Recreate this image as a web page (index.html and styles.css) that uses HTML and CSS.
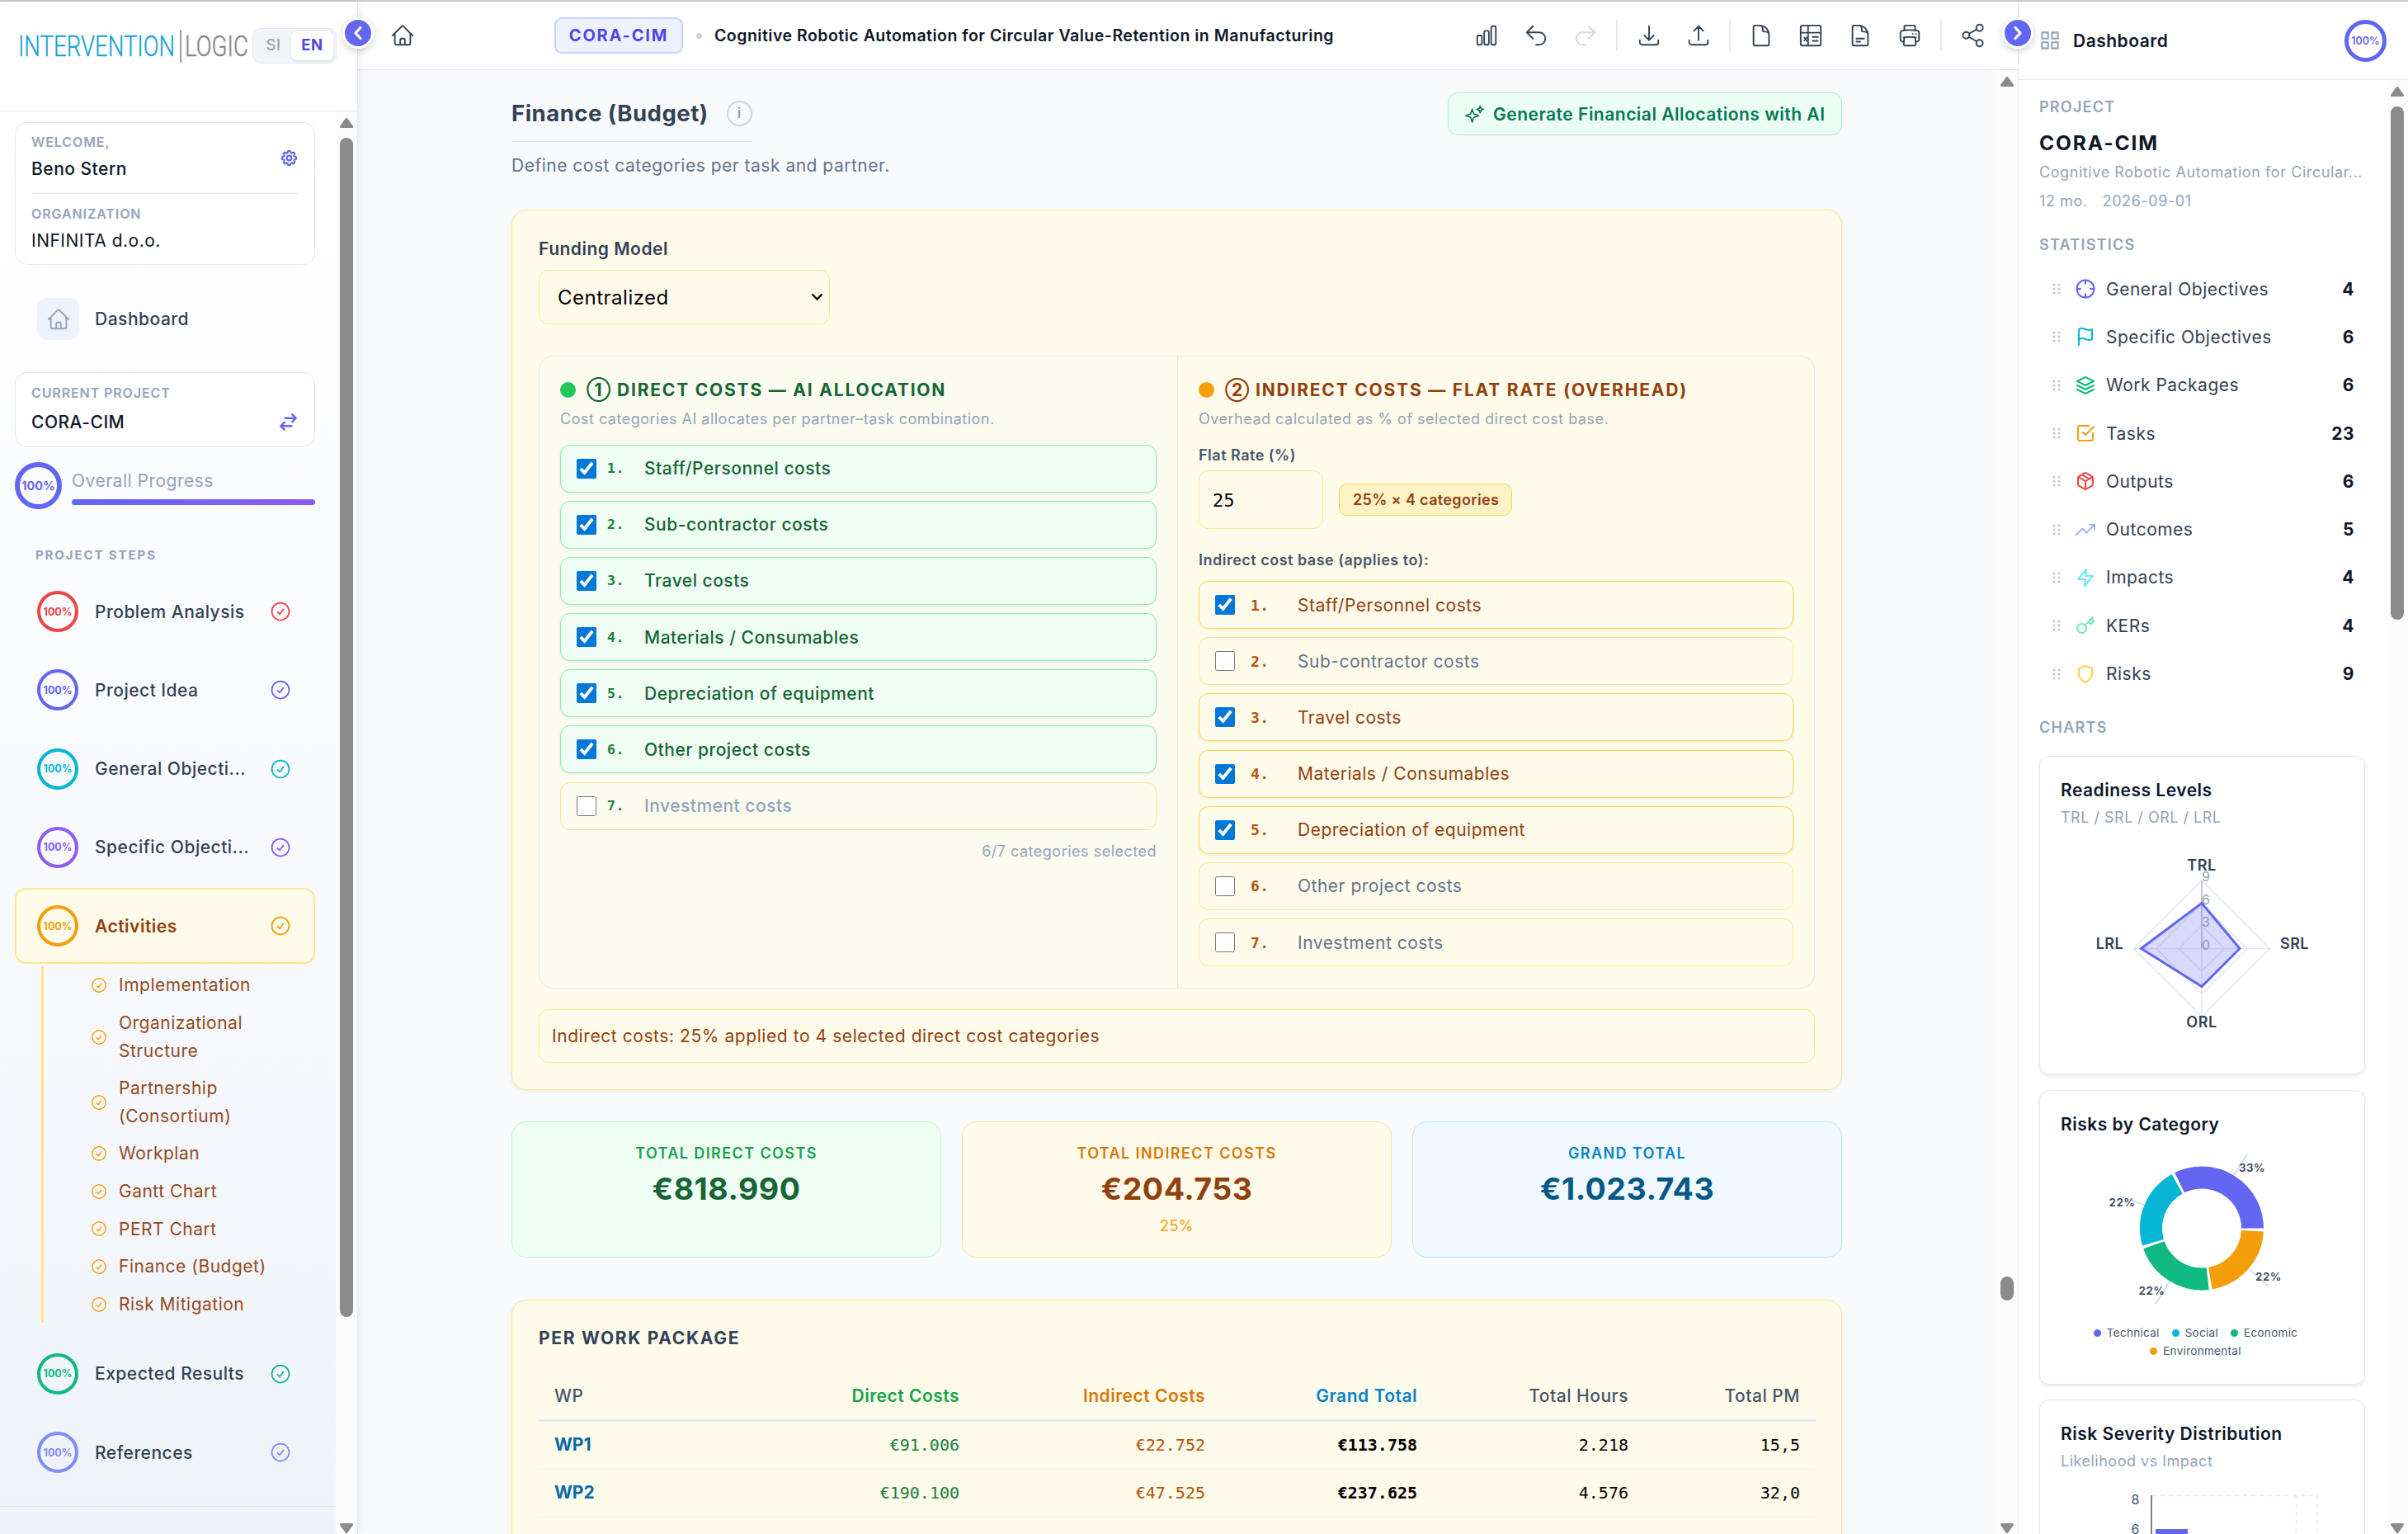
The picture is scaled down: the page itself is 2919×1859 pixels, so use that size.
FILE: index.html
```html
<!DOCTYPE html>
<html lang="en">
<head>
    <meta charset="utf-8">
    <title>Intervention Logic - Finance (Budget)</title>
    <link rel="stylesheet" href="styles.css">
</head>
<body>

<!-- icon set -->
<svg class="defs" width="0" height="0">
    <symbol id="home" viewBox="0 0 24 24"><path d="m2.25 12 8.954-8.955c.44-.439 1.152-.439 1.591 0L21.75 12M4.5 9.75v10.125c0 .621.504 1.125 1.125 1.125H9.75v-4.875c0-.621.504-1.125 1.125-1.125h2.25c.621 0 1.125.504 1.125 1.125V21h4.125c.621 0 1.125-.504 1.125-1.125V9.75M8.25 21h8.25"/></symbol>
    <symbol id="bars" viewBox="0 0 24 24"><path d="M3 13.125C3 12.504 3.504 12 4.125 12h2.25c.621 0 1.125.504 1.125 1.125v6.75C7.5 20.496 6.996 21 6.375 21h-2.25A1.125 1.125 0 0 1 3 19.875v-6.75ZM9.75 8.625c0-.621.504-1.125 1.125-1.125h2.25c.621 0 1.125.504 1.125 1.125v11.25c0 .621-.504 1.125-1.125 1.125h-2.25a1.125 1.125 0 0 1-1.125-1.125V8.625ZM16.5 4.125c0-.621.504-1.125 1.125-1.125h2.25C20.496 3 21 3.504 21 4.125v15.75c0 .621-.504 1.125-1.125 1.125h-2.25a1.125 1.125 0 0 1-1.125-1.125V4.125Z"/></symbol>
    <symbol id="undo" viewBox="0 0 24 24"><path d="M9 15 3 9m0 0 6-6M3 9h12a6 6 0 0 1 0 12h-3"/></symbol>
    <symbol id="redo" viewBox="0 0 24 24"><path d="m15 15 6-6m0 0-6-6m6 6H9a6 6 0 0 0 0 12h3"/></symbol>
    <symbol id="download" viewBox="0 0 24 24"><path d="M3 16.5v2.25A2.25 2.25 0 0 0 5.25 21h13.5A2.25 2.25 0 0 0 21 18.75V16.5M16.5 12 12 16.5m0 0L7.5 12m4.5 4.5V3"/></symbol>
    <symbol id="upload" viewBox="0 0 24 24"><path d="M3 16.5v2.25A2.25 2.25 0 0 0 5.25 21h13.5A2.25 2.25 0 0 0 21 18.75V16.5m-13.5-9L12 3m0 0 4.5 4.5M12 3v13.5"/></symbol>
    <symbol id="doc" viewBox="0 0 24 24"><path d="M19.5 14.25v-2.625a3.375 3.375 0 0 0-3.375-3.375h-1.5A1.125 1.125 0 0 1 13.5 7.125v-1.5a3.375 3.375 0 0 0-3.375-3.375H8.25m2.25 0H5.625c-.621 0-1.125.504-1.125 1.125v17.25c0 .621.504 1.125 1.125 1.125h12.75c.621 0 1.125-.504 1.125-1.125V11.25a9 9 0 0 0-9-9Z"/></symbol>
    <symbol id="sheet" viewBox="0 0 24 24"><rect x="2.25" y="2.25" width="19.5" height="19.5" rx="1.8"/><path d="M9.4 2.25v19.5M2.25 9.3h19.5M13.9 13.4h5M13.9 17.2h5M5.8 14l2.4 3M8.2 14l-2.4 3"/></symbol>
    <symbol id="doctext" viewBox="0 0 24 24"><path d="M19.5 14.25v-2.625a3.375 3.375 0 0 0-3.375-3.375h-1.5A1.125 1.125 0 0 1 13.5 7.125v-1.5a3.375 3.375 0 0 0-3.375-3.375H8.25m0 12.75h7.5m-7.5 3H12M10.5 2.25H5.625c-.621 0-1.125.504-1.125 1.125v17.25c0 .621.504 1.125 1.125 1.125h12.75c.621 0 1.125-.504 1.125-1.125V11.25a9 9 0 0 0-9-9Z"/></symbol>
    <symbol id="print" viewBox="0 0 24 24"><path d="M6.72 13.829c-.24.03-.48.062-.72.096m.72-.096a42.415 42.415 0 0 1 10.56 0m-10.56 0L6.34 18m10.94-4.171c.24.03.48.062.72.096m-.72-.096L17.66 18m0 0 .229 2.523a1.125 1.125 0 0 1-1.12 1.227H7.231c-.662 0-1.18-.568-1.12-1.227L6.34 18m11.318 0h1.091A2.25 2.25 0 0 0 21 15.75V9.456c0-1.081-.768-2.015-1.837-2.175a48.055 48.055 0 0 0-1.913-.247M6.34 18H5.25A2.25 2.25 0 0 1 3 15.75V9.456c0-1.081.768-2.015 1.837-2.175a48.041 48.041 0 0 1 1.913-.247m10.5 0a48.536 48.536 0 0 0-10.5 0m10.5 0V3.375c0-.621-.504-1.125-1.125-1.125h-8.25c-.621 0-1.125.504-1.125 1.125v3.659M18 10.5h.008v.008H18V10.5Zm-3 0h.008v.008H15V10.5Z"/></symbol>
    <symbol id="share" viewBox="0 0 24 24"><circle cx="18.1" cy="4.6" r="3.2"/><circle cx="5.1" cy="11.8" r="3.2"/><circle cx="18.1" cy="19.4" r="3.2"/><path d="M7.9 10.2l7.4-4.1M7.9 13.4l7.4 4.4"/></symbol>
    <symbol id="gear" viewBox="0 0 24 24"><path d="M10.343 3.94c.09-.542.56-.94 1.11-.94h1.093c.55 0 1.02.398 1.11.94l.149.894c.07.424.384.764.78.93.398.164.855.142 1.205-.108l.737-.527a1.125 1.125 0 0 1 1.45.12l.773.774c.39.389.44 1.002.12 1.45l-.527.737c-.25.35-.272.806-.107 1.204.165.397.505.71.93.78l.893.15c.543.09.94.559.94 1.109v1.094c0 .55-.397 1.02-.94 1.11l-.894.149c-.424.07-.764.383-.929.78-.165.398-.143.854.107 1.204l.527.738c.32.447.269 1.06-.12 1.45l-.774.773a1.125 1.125 0 0 1-1.449.12l-.738-.527c-.35-.25-.806-.272-1.203-.107-.398.165-.71.505-.781.929l-.149.894c-.09.542-.56.94-1.11.94h-1.094c-.55 0-1.019-.398-1.11-.94l-.148-.894c-.071-.424-.384-.764-.781-.93-.398-.164-.854-.142-1.204.108l-.738.527c-.447.32-1.06.269-1.45-.12l-.773-.774a1.125 1.125 0 0 1-.12-1.45l.527-.737c.25-.35.272-.806.108-1.204-.165-.397-.506-.71-.93-.78l-.894-.15c-.542-.09-.94-.56-.94-1.109v-1.094c0-.55.398-1.02.94-1.11l.894-.149c.424-.07.765-.383.93-.78.165-.398.143-.854-.108-1.204l-.526-.738a1.125 1.125 0 0 1 .12-1.45l.773-.773a1.125 1.125 0 0 1 1.45-.12l.737.527c.35.25.807.272 1.204.107.397-.165.71-.505.78-.929l.15-.894Z"/><circle cx="12" cy="12" r="3"/></symbol>
    <symbol id="swap" viewBox="0 0 24 24"><path d="M8 7h13M17 2.5 21.5 7 17 11.500M16 17H3M7 12.500 2.500 17 7 21.500"/></symbol>
    <symbol id="check" viewBox="0 0 24 24"><path d="M9 12.750 11.250 15 15 9.750M21 12a9 9 0 1 1-18 0 9 9 0 0 1 18 0Z"/></symbol>
    <symbol id="sparkle" viewBox="0 0 24 24"><path d="M9 5.500 11 11.500 17 13.800 11 16 9 22 7 16 1 13.800 7 11.500ZM19 1.500 20.200 4.600 23 5.800 20.200 7 19 10 17.800 7 15 5.800 17.800 4.600Z"/></symbol>
    <symbol id="grid" viewBox="0 0 24 24"><path d="M1.500 1.500h8v8h-8zM14.500 1.500h8v8h-8zM1.500 14.500h8v8h-8zM14.500 14.500h8v8h-8z"/></symbol>
    <symbol id="grip" viewBox="0 0 10 14"><circle cx="2" cy="2" r="1.500"/><circle cx="8" cy="2" r="1.500"/><circle cx="2" cy="7" r="1.500"/><circle cx="8" cy="7" r="1.500"/><circle cx="2" cy="12" r="1.500"/><circle cx="8" cy="12" r="1.500"/></symbol>
    <symbol id="target" viewBox="0 0 24 24"><circle cx="12" cy="12" r="10.500"/><path d="M22 12h-4M6 12H2M12 6V2M12 22v-4"/></symbol>
    <symbol id="flag" viewBox="0 0 24 24"><path d="M4 15s1-1 4-1 5 2 8 2 4-1 4-1V3s-1 1-4 1-5-2-8-2-4 1-4 1zM4 22v-7"/></symbol>
    <symbol id="layers" viewBox="0 0 24 24"><path d="M12 2 2 7l10 5 10-5-10-5zM2 17l10 5 10-5M2 12l10 5 10-5"/></symbol>
    <symbol id="task" viewBox="0 0 24 24"><path d="m9 11 3 3L22 4M21 12v7a2 2 0 0 1-2 2H5a2 2 0 0 1-2-2V5a2 2 0 0 1 2-2h11"/></symbol>
    <symbol id="box" viewBox="0 0 24 24"><path d="M16.500 9.400 7.500 4.210M21 16V8a2 2 0 0 0-1-1.730l-7-4a2 2 0 0 0-2 0l-7 4A2 2 0 0 0 3 8v8a2 2 0 0 0 1 1.730l7 4a2 2 0 0 0 2 0l7-4A2 2 0 0 0 21 16zM3.270 6.960 12 12.010l8.730-5.050M12 22.080V12"/></symbol>
    <symbol id="trend" viewBox="0 0 24 24"><path d="M23 6 13.500 15.500 8.500 10.500 1 18M17 6h6v6"/></symbol>
    <symbol id="zap" viewBox="0 0 24 24"><path d="M13 2 3 14h9l-1 8 10-12h-9l1-8z"/></symbol>
    <symbol id="key" viewBox="0 0 24 24"><path d="m21 2-2 2m-7.610 7.610a5.500 5.500 0 1 1-7.778 7.778 5.500 5.500 0 0 1 7.777-7.777zm0 0L15.500 7.500m0 0 3 3L22 7l-3-3m-3.500 3.500L19 4"/></symbol>
    <symbol id="shield" viewBox="0 0 24 24"><path d="M12 22s8-4 8-10V5l-8-3-8 3v7c0 6 8 10 8 10z"/></symbol>
    <symbol id="up" viewBox="0 0 16 12"><path d="M8 1.500 14.500 10.500H1.500Z"/></symbol>
    <symbol id="down" viewBox="0 0 16 12"><path d="M8 10.500 1.500 1.500H14.500Z"/></symbol>
</svg>

<div class="app">

<!-- left sidebar -->
<aside class="sidebar">
    <div class="brand">
        <svg class="logo" width="284" height="42">
            <text class="logo-a" x="0" y="33" textLength="190" lengthAdjust="spacingAndGlyphs">INTERVENTION</text>
            <path class="logo-bar" d="M197 1v40"/>
            <text class="logo-b" x="202" y="33" textLength="77" lengthAdjust="spacingAndGlyphs">LOGIC</text>
        </svg>
        <div class="lang"><span>SI</span><span class="on">EN</span></div>
    </div>
    <div class="scroll">
        <div class="side-body">
            <div class="card user">
                <div class="user-row">
                    <div><p class="cap">WELCOME,</p><p class="name">Beno Stern</p></div>
                    <svg class="ic gear"><use href="#gear"/></svg>
                </div>
                <div class="org"><p class="cap">ORGANIZATION</p><p class="name mid">INFINITA d.o.o.</p></div>
            </div>
            <div class="dash"><span class="dash-ic"><svg class="ic"><use href="#home"/></svg></span>Dashboard</div>
            <div class="card project">
                <div><p class="cap">CURRENT PROJECT</p><p class="name">CORA-CIM</p></div>
                <svg class="ic swap"><use href="#swap"/></svg>
            </div>
            <div class="overall">
                <span class="ring big indigo">100%</span>
                <div class="overall-r"><span>Overall Progress</span><div class="bar"></div></div>
            </div>
            <p class="steps-t">PROJECT STEPS</p>
            <div class="steps">
                <div class="step red"><span class="ring">100%</span><span class="lbl">Problem Analysis</span><svg class="ic"><use href="#check"/></svg></div>
                <div class="step indigo"><span class="ring">100%</span><span class="lbl">Project Idea</span><svg class="ic"><use href="#check"/></svg></div>
                <div class="step cyan"><span class="ring">100%</span><span class="lbl">General Objecti...</span><svg class="ic"><use href="#check"/></svg></div>
                <div class="step violet"><span class="ring">100%</span><span class="lbl">Specific Objecti...</span><svg class="ic"><use href="#check"/></svg></div>
                <div class="step amber active"><span class="ring">100%</span><span class="lbl">Activities</span><svg class="ic"><use href="#check"/></svg></div>
                <div class="subs">
                    <div class="sub"><svg class="ic"><use href="#check"/></svg><span>Implementation</span></div>
                    <div class="sub"><svg class="ic"><use href="#check"/></svg><span>Organizational<br>Structure</span></div>
                    <div class="sub"><svg class="ic"><use href="#check"/></svg><span>Partnership<br>(Consortium)</span></div>
                    <div class="sub"><svg class="ic"><use href="#check"/></svg><span>Workplan</span></div>
                    <div class="sub"><svg class="ic"><use href="#check"/></svg><span>Gantt Chart</span></div>
                    <div class="sub"><svg class="ic"><use href="#check"/></svg><span>PERT Chart</span></div>
                    <div class="sub"><svg class="ic"><use href="#check"/></svg><span>Finance (Budget)</span></div>
                    <div class="sub"><svg class="ic"><use href="#check"/></svg><span>Risk Mitigation</span></div>
                </div>
                <div class="step green"><span class="ring">100%</span><span class="lbl">Expected Results</span><svg class="ic"><use href="#check"/></svg></div>
                <div class="step peri"><span class="ring">100%</span><span class="lbl">References</span><svg class="ic"><use href="#check"/></svg></div>
            </div>
            <div class="side-end"></div>
        </div>
        <div class="sbar"><svg class="arr"><use href="#up"/></svg><i class="thumb t1"></i><svg class="arr end"><use href="#down"/></svg></div>
    </div>
    <span class="toggle"><svg width="32" height="32" viewBox="0 0 32 32"><path d="M19 9.500 13 16l6 6.500"/></svg></span>
</aside>

<!-- main column -->
<main class="main">
    <header class="top">
        <svg class="ic home"><use href="#home"/></svg>
        <div class="crumb"><span class="tag">CORA-CIM</span><i class="dot"></i><span class="ptitle">Cognitive Robotic Automation for Circular Value-Retention in Manufacturing</span></div>
        <div class="tools">
            <svg class="ic"><use href="#bars"/></svg>
            <svg class="ic"><use href="#undo"/></svg>
            <svg class="ic off"><use href="#redo"/></svg>
            <i class="sep"></i>
            <svg class="ic"><use href="#download"/></svg>
            <svg class="ic"><use href="#upload"/></svg>
            <i class="sep"></i>
            <svg class="ic"><use href="#doc"/></svg>
            <svg class="ic"><use href="#sheet"/></svg>
            <svg class="ic"><use href="#doctext"/></svg>
            <svg class="ic"><use href="#print"/></svg>
            <i class="sep"></i>
            <svg class="ic"><use href="#share"/></svg>
        </div>
    </header>
    <div class="scroll">
        <div class="content">
            <div class="head">
                <div class="head-l"><h1>Finance (Budget)</h1><span class="info">i</span></div>
                <button class="ai"><svg class="ic"><use href="#sparkle"/></svg>Generate Financial Allocations with AI</button>
            </div>
            <p class="desc">Define cost categories per task and partner.</p>

            <section class="panel model">
                <label class="fl">Funding Model</label>
                <div class="select">Centralized<svg width="15" height="10" viewBox="0 0 15 10"><path d="M1.500 1.500l6 6 6-6"/></svg></div>
                <div class="cols">
                    <div class="col direct">
                        <h2><i></i><span class="num">①</span>DIRECT COSTS — AI ALLOCATION</h2>
                        <p class="note">Cost categories AI allocates per partner–task combination.</p>
                        <div class="rows">
                            <label class="row on"><input type="checkbox" checked><b>1.</b>Staff/Personnel costs</label>
                            <label class="row on"><input type="checkbox" checked><b>2.</b>Sub-contractor costs</label>
                            <label class="row on"><input type="checkbox" checked><b>3.</b>Travel costs</label>
                            <label class="row on"><input type="checkbox" checked><b>4.</b>Materials / Consumables</label>
                            <label class="row on"><input type="checkbox" checked><b>5.</b>Depreciation of equipment</label>
                            <label class="row on"><input type="checkbox" checked><b>6.</b>Other project costs</label>
                            <label class="row"><input type="checkbox"><b>7.</b>Investment costs</label>
                        </div>
                        <p class="count">6/7 categories selected</p>
                    </div>
                    <div class="col indirect">
                        <h2><i></i><span class="num">②</span>INDIRECT COSTS — FLAT RATE (OVERHEAD)</h2>
                        <p class="note">Overhead calculated as % of selected direct cost base.</p>
                        <p class="small">Flat Rate (%)</p>
                        <div class="rate"><div class="rate-in">25</div><span class="pill">25% × 4 categories</span></div>
                        <p class="small base">Indirect cost base (applies to):</p>
                        <div class="rows">
                            <label class="row on"><input type="checkbox" checked><b>1.</b>Staff/Personnel costs</label>
                            <label class="row"><input type="checkbox"><b>2.</b>Sub-contractor costs</label>
                            <label class="row on"><input type="checkbox" checked><b>3.</b>Travel costs</label>
                            <label class="row on"><input type="checkbox" checked><b>4.</b>Materials / Consumables</label>
                            <label class="row on"><input type="checkbox" checked><b>5.</b>Depreciation of equipment</label>
                            <label class="row"><input type="checkbox"><b>6.</b>Other project costs</label>
                            <label class="row"><input type="checkbox"><b>7.</b>Investment costs</label>
                        </div>
                    </div>
                </div>
                <p class="sum">Indirect costs: 25% applied to 4 selected direct cost categories</p>
            </section>

            <div class="totals">
                <div class="total g"><p>TOTAL DIRECT COSTS</p><strong>€818.990</strong></div>
                <div class="total a"><p>TOTAL INDIRECT COSTS</p><strong>€204.753</strong><small>25%</small></div>
                <div class="total b"><p>GRAND TOTAL</p><strong>€1.023.743</strong></div>
            </div>

            <section class="panel wp">
                <h3>PER WORK PACKAGE</h3>
                <table>
                    <colgroup><col class="c1"><col class="c2"><col class="c3"><col class="c4"><col class="c5"><col class="c6"></colgroup>
                    <tr><th>WP</th><th class="tg">Direct Costs</th><th class="ta">Indirect Costs</th><th class="tb">Grand Total</th><th>Total Hours</th><th>Total PM</th></tr>
                    <tr><td>WP1</td><td>€91.006</td><td>€22.752</td><td>€113.758</td><td>2.218</td><td>15,5</td></tr>
                    <tr><td>WP2</td><td>€190.100</td><td>€47.525</td><td>€237.625</td><td>4.576</td><td>32,0</td></tr>
                </table>
            </section>
        </div>
        <div class="sbar"><svg class="arr"><use href="#up"/></svg><i class="thumb t2"></i><svg class="arr end"><use href="#down"/></svg></div>
    </div>
</main>

<!-- right dashboard -->
<aside class="right">
    <span class="toggle"><svg width="32" height="32" viewBox="0 0 32 32"><path d="M13 9.500 19 16l-6 6.500"/></svg></span>
    <div class="r-head"><svg class="ic"><use href="#grid"/></svg><span>Dashboard</span><span class="ring indigo">100%</span></div>
    <div class="scroll">
        <div class="r-body">
            <p class="sec">PROJECT</p>
            <p class="r-name">CORA-CIM</p>
            <p class="r-sub">Cognitive Robotic Automation for Circular...</p>
            <p class="r-sub meta"><span>12 mo.</span><span>2026-09-01</span></p>
            <p class="sec">STATISTICS</p>
            <div class="stats">
                <div class="stat indigo"><svg class="grip"><use href="#grip"/></svg><svg class="ic"><use href="#target"/></svg><span>General Objectives</span><b>4</b></div>
                <div class="stat cyan"><svg class="grip"><use href="#grip"/></svg><svg class="ic"><use href="#flag"/></svg><span>Specific Objectives</span><b>6</b></div>
                <div class="stat green"><svg class="grip"><use href="#grip"/></svg><svg class="ic"><use href="#layers"/></svg><span>Work Packages</span><b>6</b></div>
                <div class="stat amber"><svg class="grip"><use href="#grip"/></svg><svg class="ic"><use href="#task"/></svg><span>Tasks</span><b>23</b></div>
                <div class="stat red"><svg class="grip"><use href="#grip"/></svg><svg class="ic"><use href="#box"/></svg><span>Outputs</span><b>6</b></div>
                <div class="stat lav"><svg class="grip"><use href="#grip"/></svg><svg class="ic"><use href="#trend"/></svg><span>Outcomes</span><b>5</b></div>
                <div class="stat sky"><svg class="grip"><use href="#grip"/></svg><svg class="ic"><use href="#zap"/></svg><span>Impacts</span><b>4</b></div>
                <div class="stat mint"><svg class="grip"><use href="#grip"/></svg><svg class="ic"><use href="#key"/></svg><span>KERs</span><b>4</b></div>
                <div class="stat yellow"><svg class="grip"><use href="#grip"/></svg><svg class="ic"><use href="#shield"/></svg><span>Risks</span><b>9</b></div>
            </div>
            <p class="sec charts-t">CHARTS</p>

            <div class="chart c-radar">
                <h4>Readiness Levels</h4>
                <p>TRL / SRL / ORL / LRL</p>
                <svg width="394" height="270" viewBox="2472 1020 394 270">
                    <g class="web">
                        <path d="M2669 1067l82.500 82.500-82.500 82.500-82.500-82.500zM2669 1094.500l55 55-55 55-55-55zM2669 1122l27.500 27.500-27.500 27.500-27.500-27.500zM2586.500 1149.500h165M2669 1149.500v82.500"/>
                    </g>
                    <path class="axis" d="M2669 1067v82.500"/>
                    <g class="tick"><text x="2669" y="1067.500">9</text><text x="2669" y="1095.500">6</text><text x="2669" y="1122.500">3</text><text x="2669" y="1150.500">0</text></g>
                    <path class="area" d="M2669 1094.500l46 55-46 46-73.500-46z"/>
                    <g class="axl"><text x="2669" y="1055">TRL</text><text x="2781.500" y="1150">SRL</text><text x="2669" y="1244.500">ORL</text><text x="2557.500" y="1150">LRL</text></g>
                </svg>
            </div>

            <div class="chart c-pie">
                <h4>Risks by Category</h4>
                <svg width="394" height="206" viewBox="2472 1390 394 206">
                    <path class="lead" d="M2708 1424l16-25M2599 1460l-29-10M2630 1553l-17 27M2726 1538l24 21"/>
                    <!-- sectors: 3/2/2/2 of 9, 3deg padding -->
                    <g fill="none" stroke-width="27">
                        <path stroke="#6366f1" d="M2730.500 1488.500A61.500 61.500 0 0 0 2642.040 1433.220"/>
                        <path stroke="#06b6d4" d="M2639.180 1434.710A61.500 61.500 0 0 0 2609.970 1505.760"/>
                        <path stroke="#10b981" d="M2610.960 1508.830A61.500 61.500 0 0 0 2676.180 1549.580"/>
                        <path stroke="#f59e0b" d="M2679.360 1549.120A61.500 61.500 0 0 0 2730.420 1491.720"/>
                    </g>
                    <g class="pct"><text x="2730" y="1419.500">33%</text><text x="2572.500" y="1462">22%</text><text x="2608.500" y="1569">22%</text><text x="2750" y="1552">22%</text></g>
                </svg>
                <div class="legend">
                    <span><i class="indigo"></i>Technical</span><span><i class="cyan"></i>Social</span><span><i class="green"></i>Economic</span>
                </div>
                <div class="legend"><span><i class="amber"></i>Environmental</span></div>
            </div>

            <div class="chart c-bar">
                <h4>Risk Severity Distribution</h4>
                <p>Likelihood vs Impact</p>
                <svg width="394" height="70" viewBox="2472 1800 394 70">
                    <path class="dash-l" d="M2609 1814.500h200M2783.500 1814v60M2809 1814v60"/>
                    <path class="yax" d="M2608 1814v60"/>
                    <rect x="2613" y="1855" width="39" height="20" fill="#6366f1"/>
                    <g class="ylab"><text x="2594" y="1825">8</text><text x="2594" y="1861">6</text></g>
                </svg>
            </div>
        </div>
        <div class="sbar"><svg class="arr"><use href="#up"/></svg><i class="thumb t3"></i><svg class="arr end"><use href="#down"/></svg></div>
    </div>
</aside>

</div>
</body>
</html>
```
FILE: styles.css
```css
* {
  box-sizing: border-box;
}
body {
  margin: 0;
  height: 1859px;
  overflow: hidden;
  font-family: Inter, "Liberation Sans", sans-serif;
  font-size: 21px;
  letter-spacing: .5px;
  color: #0f172a;
  background: #f8fafc;
}
p, h1, h2, h3, h4 {
  margin: 0;
}
.defs {
  position: absolute;
}
.app {
  display: grid;
  grid-template-columns: 434px 2012px 473px;
  height: 1859px;
  border-top: 2px solid #ccc;
}
.ic {
  width: 30px;
  height: 30px;
  flex: none;
  fill: none;
  stroke: currentColor;
  stroke-width: 1.5;
  stroke-linecap: round;
  stroke-linejoin: round;
}
.scroll {
  display: flex;
  flex: 1;
  min-height: 0;
  overflow: hidden;
}

/* colours */
.red { color: #ef4444; }
.indigo { color: #6366f1; }
.cyan { color: #06b6d4; }
.violet { color: #8b5cf6; }
.amber { color: #f59e0b; }
.green { color: #10b981; }
.peri { color: #818cf8; }
.lav { color: #a5b4fc; }
.sky { color: #67e8f9; }
.mint { color: #6ee7b7; }
.yellow { color: #fcd34d; }

/* scrollbars */
.sbar {
  display: flex;
  flex-direction: column;
  align-items: center;
  width: 26px;
  flex: none;
  background: #fcfcfc;
  padding: 8px 0 1px;
}
.arr {
  width: 16px;
  height: 12px;
  flex: none;
  fill: #8b8b8b;
  stroke: #8b8b8b;
  stroke-width: 3;
  stroke-linejoin: round;
}
.arr.end {
  margin-top: auto;
}
.thumb {
  width: 16px;
  border-radius: 8px;
  background: #8b8b8b;
}
.t1 { height: 1429px; margin-top: 12px; }
.t2 { height: 29px; margin-top: 1442px; }
.t3 { height: 622px; margin-top: 12px; }

.toggle {
  position: absolute;
  top: 19px;
  z-index: 5;
  width: 38px;
  height: 38px;
  border: 3px solid #fff;
  border-radius: 50%;
  background: #6366f1;
  box-shadow: 0 3px 9px rgba(15, 23, 42, .2);
}
.toggle svg {
  display: block;
  fill: none;
  stroke: #fff;
  stroke-width: 3.2;
  stroke-linecap: round;
  stroke-linejoin: round;
}

/* sidebar */
.sidebar {
  position: relative;
  display: flex;
  flex-direction: column;
  min-height: 0;
  border-right: 1px solid #e2e8f0;
  background: linear-gradient(#fff, #fafbfe 45%, #eff3f9);
  box-shadow: 2px 0 10px rgba(15, 23, 42, .07);
  z-index: 2;
}
.sidebar .toggle {
  left: 415px;
}
.brand {
  display: flex;
  align-items: flex-start;
  height: 133px;
  padding: 32px 0 0 22px;
  border-bottom: 1px solid #e2e8f0;
}
.logo {
  margin-top: 1px;
  overflow: visible;
  font-family: Roboto, sans-serif;
  font-size: 35px;
  font-weight: 300;
  letter-spacing: 0;
}
.logo-a { fill: #1ba5d8; stroke: #1ba5d8; stroke-width: .4; }
.logo-b { fill: #858585; stroke: #858585; stroke-width: .4; }
.logo-bar {
  stroke: #a0a0a0;
  stroke-width: 2;
}
.lang {
  display: flex;
  width: 102px;
  height: 43px;
  padding: 3px;
  border: 1px solid #e2e8f0;
  border-radius: 10px;
  background: #f1f5f9;
  color: #94a3b8;
  font-size: 18.500px;
  font-weight: 500;
  line-height: 33px;
  text-align: center;
}
.lang span {
  width: 43px;
}
.lang .on {
  width: 51px;
  height: 35px;
  border-radius: 7px;
  background: #fff;
  color: #4f46e5;
  font-weight: 700;
  box-shadow: 0 1px 3px rgba(0, 0, 0, .1);
}
.side-body {
  width: 407px;
  padding: 13px 25px 0 18px;
}
.card {
  border: 1px solid #e2e8f0;
  border-radius: 15px;
  background: #fff;
}
.cap {
  color: #94a3b8;
  font-size: 16px;
  font-weight: 600;
  letter-spacing: .9px;
  line-height: 24px;
}
.name {
  margin-top: 6px;
  font-weight: 500;
  line-height: 30px;
}
.name.mid {
  font-weight: 400;
}
.user {
  height: 173px;
  padding: 11px 19px;
}
.user-row {
  display: flex;
  justify-content: space-between;
  height: 75px;
  border-bottom: 1px solid #e2e8f0;
}
.gear {
  width: 23px;
  height: 23px;
  margin-top: 20px;
  color: #6366f1;
  stroke-width: 2.2;
}
.org {
  padding-top: 12px;
}
.dash {
  display: flex;
  align-items: center;
  gap: 19px;
  margin: 40px 0 39px;
  padding-left: 27px;
  font-weight: 500;
  color: #334155;
}
.dash-ic {
  display: grid;
  place-items: center;
  width: 51px;
  height: 51px;
  border-radius: 12px;
  background: #eef2ff;
  color: #94a3b8;
}
.project {
  display: flex;
  justify-content: space-between;
  height: 91px;
  padding: 12px 19px;
}
.project .name {
  margin-top: 9px;
}
.swap {
  width: 23px;
  height: 23px;
  margin: 36px 1px 0 0;
  color: #6366f1;
  stroke-width: 2.6;
}
.ring {
  display: grid;
  place-items: center;
  width: 50px;
  height: 50px;
  flex: none;
  border: 4.500px solid currentColor;
  border-radius: 50%;
  font-size: 12.500px;
  font-weight: 700;
  letter-spacing: 0;
}
.ring.big {
  width: 57px;
  height: 57px;
  border-width: 6px;
  font-size: 14.500px;
}
.overall {
  display: flex;
  gap: 12px;
  margin-top: 18px;
  color: #94a3b8;
}
.overall-r {
  flex: 1;
  padding-top: 9px;
  line-height: 28px;
}
.bar {
  height: 7px;
  margin-top: 8px;
  border-radius: 4px;
  background: linear-gradient(90deg, #6366f1, #8b5cf6);
}
.steps-t {
  margin: 44px 0 0 25px;
  color: #94a3b8;
  font-size: 15px;
  font-weight: 700;
  letter-spacing: 1.900px;
  line-height: 24px;
}
.steps {
  display: flex;
  flex-direction: column;
  gap: 3.300px;
  padding-top: 10px;
}
.step {
  display: flex;
  align-items: center;
  height: 92px;
  padding: 0 27px 0 26px;
  border: 1px solid transparent;
  border-radius: 13px;
}
.step .ic {
  width: 28px;
  height: 28px;
  stroke-width: 1.500;
}
.lbl {
  flex: 1;
  margin-left: 20px;
  color: #334155;
  font-weight: 500;
  white-space: nowrap;
}
.active {
  border: 2px solid #fde68a;
  background: #fffbeb;
  padding: 0 26px 0 25px;
}
.active .lbl {
  color: #92400e;
  font-weight: 600;
}
.subs {
  margin: 0 0 12px 32px;
  padding-left: 56px;
  border-left: 3px solid #fde68a;
}
.sub {
  display: flex;
  align-items: center;
  gap: 13px;
  padding: 6px 0;
  color: #924a1c;
  line-height: 33.600px;
}
.sub .ic {
  width: 22px;
  height: 22px;
  color: #f59e0b;
}
.side-end {
  margin: 19px -25px 0 -18px;
  border-top: 1px solid #dde3ec;
}

/* main */
.main {
  display: flex;
  flex-direction: column;
  min-height: 0;
}
.top {
  display: flex;
  align-items: center;
  height: 83px;
  padding-left: 39px;
  border-bottom: 1px solid #e2e8f0;
  background: #fff;
  color: #334155;
}
.crumb {
  display: flex;
  align-items: center;
  margin-left: 169px;
}
.tag {
  width: 156px;
  height: 44px;
  border: 2px solid #c7d2fe;
  border-radius: 9px;
  background: #eef2ff;
  color: #4f46e5;
  font-size: 20px;
  font-weight: 700;
  letter-spacing: 1.800px;
  line-height: 40px;
  text-align: center;
}
.dot {
  width: 7px;
  height: 7px;
  margin: 0 15px 0 16px;
  border-radius: 50%;
  background: #cbd5e1;
}
.ptitle {
  width: 760px;
  color: #0f172a;
  font-size: 19.500px;
  font-weight: 600;
  white-space: nowrap;
}
.tools {
  display: flex;
  align-items: center;
  gap: 30px;
  margin-left: 161px;
}
.sep {
  width: 2px;
  height: 38px;
  margin: 0 -7.750px;
  background: #e2e8f0;
}
.off {
  opacity: .2;
}
.content {
  width: 1986px;
  padding: 27px 187px 0 186px;
}
.head {
  display: flex;
  justify-content: space-between;
  align-items: flex-start;
}
.head-l {
  display: flex;
  align-items: center;
  gap: 22px;
  height: 60px;
  padding-bottom: 9px;
  border-bottom: 1px solid #e2e8f0;
}
h1 {
  font-size: 27.500px;
  font-weight: 700;
  color: #334155;
}
.info {
  width: 31px;
  height: 31px;
  border: 2px solid #cbd5e1;
  border-radius: 50%;
  color: #94a3b8;
  font-size: 17px;
  font-weight: 600;
  letter-spacing: 0;
  line-height: 27px;
  text-align: center;
}
.ai {
  display: flex;
  align-items: center;
  gap: 11px;
  width: 478px;
  height: 52px;
  padding: 0 0 0 20px;
  border: 1px solid #a7f3d0;
  border-radius: 12px;
  background: #ecfdf5;
  color: #047857;
  font-family: inherit;
  font-size: 21px;
  font-weight: 600;
  letter-spacing: .5px;
  white-space: nowrap;
}
.ai .ic {
  width: 23px;
  height: 23px;
  stroke-width: 1.700;
}
.desc {
  margin-top: 15px;
  color: #64748b;
  line-height: 28px;
}
.panel {
  border: 1px solid #fde68a;
  border-radius: 18px;
  background: #fffbeb;
  box-shadow: 0 2px 5px rgba(15, 23, 42, .06);
  padding: 0 32px;
}
.model {
  height: 1067px;
  margin-top: 39px;
}
.fl {
  display: block;
  padding-top: 33px;
  color: #334155;
  font-weight: 600;
  line-height: 28px;
}
.select {
  display: flex;
  align-items: center;
  justify-content: space-between;
  width: 353px;
  height: 66px;
  margin-top: 11px;
  padding: 0 7px 0 22px;
  border: 1px solid #fde68a;
  border-radius: 12px;
  color: #000;
  font-size: 24px;
}
.select svg {
  fill: none;
  stroke: #000;
  stroke-width: 2.300;
}
.cols {
  display: grid;
  grid-template-columns: 774px 1fr;
  height: 767px;
  margin-top: 38px;
  border: 1px solid #e2e8f0;
  border-radius: 18px;
  overflow: hidden;
}
.col {
  padding: 25px 25px 0;
}
.direct {
  border-right: 1px solid #e2e8f0;
  background: #fbfbf0;
}
h2 {
  display: flex;
  align-items: center;
  height: 30px;
  font-size: 21px;
  font-weight: 700;
  letter-spacing: 1.800px;
  white-space: nowrap;
}
h2 i {
  width: 19px;
  height: 19px;
  margin-right: 13px;
  border-radius: 50%;
}
.num {
  width: 37px;
  letter-spacing: 0;
}
.direct h2 { color: #166534; }
.direct h2 i { background: #22c55e; }
.indirect h2 { color: #92400e; }
.indirect h2 i { background: #f59e0b; }
.note {
  margin-top: 8px;
  color: #94a3b8;
  font-size: 18px;
  line-height: 26px;
}
.rows {
  display: flex;
  flex-direction: column;
  gap: 10.200px;
  margin-top: 18px;
}
.row {
  display: flex;
  align-items: center;
  height: 58px;
  padding-left: 19px;
  border: 1px solid #fde68a;
  border-radius: 12px;
  white-space: nowrap;
}
.row.on {
  box-shadow: 0 1px 3px rgba(15, 23, 42, .08);
}
.row input {
  width: 24px;
  height: 24px;
  margin: 0;
  accent-color: #0078d7;
}
.row b {
  width: 45px;
  margin-left: 13px;
  font-family: "DejaVu Sans Mono", monospace;
  font-size: 16.500px;
  color: #15803d;
}
.direct .rows {
  margin-top: 17.500px;
}
.direct .row { color: #94a3b8; font-weight: 500; }
.direct .row.on {
  border-color: #86efac;
  background: #f0fdf4;
  color: #166534;
}
.count {
  margin-top: 13px;
  color: #94a3b8;
  font-size: 18px;
  line-height: 26px;
  text-align: right;
}
.indirect .row { color: #64748b; }
.indirect .row.on { border-color: #fcd34d; color: #92400e; }
.indirect .row b {
  width: 57px;
  margin-left: 19px;
  font-size: 18px;
  color: #b45309;
}
.small {
  margin-top: 18px;
  color: #475569;
  font-size: 18px;
  font-weight: 600;
  line-height: 26px;
}
.rate {
  display: flex;
  align-items: center;
  gap: 19px;
  margin-top: 5px;
}
.rate-in {
  width: 151px;
  height: 71px;
  padding-left: 16px;
  border: 1px solid #fde68a;
  border-radius: 12px;
  color: #000;
  font: 22px/71px "DejaVu Sans Mono", monospace;
  letter-spacing: 0;
}
.pill {
  height: 39px;
  padding: 0 15px 0 16px;
  border: 1px solid #fcd34d;
  border-radius: 10px;
  background: #fef3c7;
  color: #92400e;
  font-size: 18px;
  font-weight: 600;
  letter-spacing: .35px;
  line-height: 37px;
}
.base {
  margin-top: 25px;
}
.base + .rows {
  margin-top: 12px;
}
.sum {
  height: 65px;
  margin-top: 25px;
  padding-left: 15px;
  border: 1px solid #fde68a;
  border-radius: 12px;
  color: #92400e;
  letter-spacing: .57px;
  line-height: 63px;
}
.totals {
  display: grid;
  grid-template-columns: repeat(3, 1fr);
  gap: 25px;
  margin-top: 38px;
}
.total {
  height: 165px;
  padding-top: 25px;
  border: 1px solid;
  border-radius: 18px;
  text-align: center;
}
.total p {
  font-size: 18px;
  font-weight: 600;
  letter-spacing: 1.400px;
  line-height: 26px;
}
.total strong {
  display: block;
  margin-top: 5px;
  font-size: 37.500px;
  line-height: 50px;
}
.total small {
  display: block;
  margin-top: 7px;
  font-size: 18px;
  line-height: 26px;
}
.g { border-color: #bbf7d0; background: #f0fdf4; color: #16a34a; }
.a { border-color: #fde68a; background: #fffbeb; color: #d97706; }
.b { border-color: #bae6fd; background: #f0f9ff; color: #0284c7; }
.g strong { color: #166534; }
.a strong { color: #92400e; }
.b strong { color: #075985; }
.a small { color: #f59e0b; }
.wp {
  height: 400px;
  margin-top: 51px;
}
h3 {
  padding-top: 32px;
  color: #334155;
  font-size: 21px;
  font-weight: 700;
  letter-spacing: 1.700px;
  line-height: 28px;
}
table {
  width: 1548px;
  margin-top: 26px;
  border-collapse: separate;
  border-spacing: 0;
  table-layout: fixed;
}
.c1 { width: 160px; }
.c2 { width: 369px; }
.c3 { width: 298px; }
.c4 { width: 257px; }
.c5 { width: 256px; }
.c6 { width: 208px; }
th {
  height: 61px;
  padding: 0 19px;
  border-bottom: 3px solid #e2e8f0;
  color: #475569;
  font-weight: 500;
  text-align: right;
}
th.tg { color: #16a34a; font-weight: 600; }
th.ta { color: #d97706; font-weight: 600; }
th.tb { color: #0284c7; font-weight: 600; }
td {
  height: 58px;
  padding: 0 19px 2px;
  border-bottom: 1px solid #f1f5f9;
  color: #000;
  font: 20px "DejaVu Sans Mono", monospace;
  letter-spacing: 0;
  text-align: right;
}
th:first-child {
  text-align: left;
}
td:first-child {
  color: #0369a1;
  font: 700 21px Inter, sans-serif;
  text-align: left;
}
td:nth-child(2) { color: #15803d; }
td:nth-child(3) { color: #b45309; }
td:nth-child(4) { font-weight: 700; }

/* right panel */
.right {
  position: relative;
  display: flex;
  flex-direction: column;
  min-height: 0;
  border-left: 1px solid #e2e8f0;
  background: #fff;
}
.right .toggle {
  left: -20px;
}
.r-head {
  display: flex;
  align-items: center;
  height: 95px;
  padding: 0 26px 0 27px;
  border-bottom: 1px solid #e2e8f0;
  font-weight: 600;
}
.r-head .ic {
  width: 22px;
  height: 22px;
  margin-right: 17px;
  color: #94a3b8;
  stroke-width: 2.200;
  stroke-linejoin: miter;
}
.r-head .ring {
  width: 51px;
  height: 51px;
  margin-left: auto;
  border-width: 5px;
  font-weight: 600;
}
.r-body {
  width: 446px;
  padding: 20px 26px 0 25px;
}
.sec {
  color: #94a3b8;
  font-size: 18px;
  font-weight: 600;
  letter-spacing: 1.250px;
  line-height: 26px;
}
.r-name {
  margin-top: 14px;
  font-size: 24.500px;
  font-weight: 700;
  letter-spacing: 1.900px;
  line-height: 32px;
}
.r-sub {
  margin-top: 7px;
  color: #94a3b8;
  font-size: 18px;
  letter-spacing: .58px;
  line-height: 26px;
  white-space: nowrap;
}
.meta {
  display: flex;
  gap: 18px;
  margin: 9px 0 27px;
}
.stats {
  margin-top: 11px;
}
.stat {
  display: flex;
  align-items: center;
  height: 58.300px;
  padding: 0 13px 0 16px;
}
.grip {
  width: 10px;
  height: 14px;
  margin-right: 18px;
  fill: #c3c3d3;
}
.stat .ic {
  width: 24px;
  height: 24px;
  stroke-width: 2;
}
.stat span {
  flex: 1;
  margin-left: 13px;
  color: #334155;
}
.stat b {
  color: #0f172a;
}
.charts-t {
  margin: 23px 0 21.500px;
}
.chart {
  width: 395px;
  margin-bottom: 19px;
  border: 1px solid #e2e8f0;
  border-radius: 12px;
  box-shadow: 0 2px 4px rgba(15, 23, 42, .1);
  overflow: hidden;
}
.chart h4 {
  padding: 27px 0 0 25px;
  font-size: 21px;
  font-weight: 600;
  line-height: 28px;
}
.chart p {
  padding: 6px 0 0 25px;
  color: #94a3b8;
  font-size: 18px;
  line-height: 26px;
}
.chart svg {
  display: block;
  margin-left: -1px;
}
.c-radar { height: 386px; }
.c-radar svg { margin-top: 16px; }
.web path {
  fill: none;
  stroke: #e2e8f0;
  stroke-width: 1.500;
}
.axis {
  stroke: #c8c8cc;
  stroke-width: 2;
}
.tick {
  fill: #94a3b8;
  font-size: 16px;
}
.area {
  fill: rgba(99, 102, 241, .25);
  stroke: #6366f1;
  stroke-width: 3;
}
.axl {
  fill: #334155;
  font-size: 18px;
  font-weight: 600;
  text-anchor: middle;
}
.c-pie { height: 357px; margin-bottom: 18px; }
.c-pie svg { margin-top: 13px; }
.lead {
  stroke: #cbd5e1;
  stroke-width: 1.500;
}
.pct {
  fill: #334155;
  font-size: 13.500px;
  font-weight: 600;
  text-anchor: middle;
}
.legend {
  display: flex;
  justify-content: center;
  gap: 15px;
  margin: 8px 16px -8px 0;
  color: #475569;
  font-size: 13.500px;
  letter-spacing: .3px;
  line-height: 22px;
}
.legend i {
  display: inline-block;
  width: 9px;
  height: 9px;
  margin-right: 7px;
  border-radius: 50%;
  background: currentColor;
}
.dash-l {
  fill: none;
  stroke: #e2e8f0;
  stroke-width: 1.500;
  stroke-dasharray: 5 5;
}
.yax {
  stroke: #808080;
  stroke-width: 2;
}
.c-bar { height: 400px; }
.c-bar svg { margin-top: 14px; }
.ylab {
  fill: #475569;
  font-size: 16px;
  text-anchor: end;
}
```
